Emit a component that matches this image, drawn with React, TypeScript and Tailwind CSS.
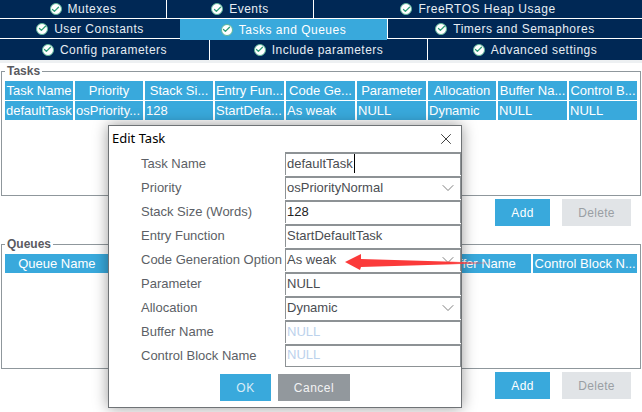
import type { ReactNode } from "react";
import { Check, ChevronDown, X } from "lucide-react";

const font = "font-['Liberation_Sans',Arial,sans-serif]";

function TabIcon() {
  return (
    <span className="flex h-[12px] w-[12px] items-center justify-center rounded-full border-[1.5px] border-[#5fb89a] bg-white">
      <Check size={9} strokeWidth={3.5} className="text-[#2f9e78]" />
    </span>
  );
}

function Tab({ label, className = "" }: { label: string; className?: string }) {
  return (
    <div className={`flex items-center justify-center gap-[6px] text-[12px] tracking-[0.5px] text-[#e6edf3] ${className}`}>
      <TabIcon />
      <span>{label}</span>
    </div>
  );
}

function Tabs() {
  return (
    <div className="bg-[#002855]">
      <div className="flex h-[19px] border-b border-white">
        <Tab label="Mutexes" className="w-[167px] border-r border-white" />
        <Tab label="Events" className="w-[147px] border-r border-white" />
        <Tab label="FreeRTOS Heap Usage" className="flex-1" />
      </div>
      <div className="flex h-[20px]">
        <Tab label="User Constants" className="w-[180px] border-b border-white" />
        <Tab label="Tasks and Queues" className="relative z-10 mb-[-1px] w-[207px] bg-[#39a9dc] text-white" />
        <Tab label="Timers and Semaphores" className="flex-1 border-b border-l border-white" />
      </div>
      <div className="flex h-[21px]">
        <Tab label="Config parameters" className="w-[210px] border-r border-white" />
        <Tab label="Include parameters" className="w-[217px]" />
        <Tab label="Advanced settings" className="flex-1 border-l border-white" />
      </div>
    </div>
  );
}

const taskColumns = [
  ["Task Name", "defaultTask"],
  ["Priority", "osPriority..."],
  ["Stack Si...", "128"],
  ["Entry Fun...", "StartDefa..."],
  ["Code Ge...", "As weak"],
  ["Parameter", "NULL"],
  ["Allocation", "Dynamic"],
  ["Buffer Na...", "NULL"],
  ["Control B...", "NULL"],
];

const queueColumns = ["Queue Name", "Queue Size", "Item Size", "Queue Type", "Buffer Name", "Control Block N..."];

function Group({ title, children }: { title: string; children: ReactNode }) {
  return (
    <fieldset className="mx-[1px] h-[132px] border border-[#8f979c] px-[3px]">
      <legend className="px-[2px] text-[12px] font-bold leading-[14px] text-[#5a5a5f]">{title}</legend>
      {children}
    </fieldset>
  );
}

function Actions() {
  return (
    <div className="flex h-[41px] items-start gap-[12px] pl-[495px] pt-[3px] text-[12px] tracking-[0.3px]">
      <div className="flex h-[27px] w-[55px] items-center justify-center bg-[#39a9dc] text-white">Add</div>
      <div className="flex h-[27px] w-[69px] items-center justify-center bg-[#e1e4e7] text-[#9a9fa4]">Delete</div>
    </div>
  );
}

const fields: { label: string; value: string; kind?: "select" | "hint" | "focus" | "dark" }[] = [
  { label: "Task Name", value: "defaultTask", kind: "focus" },
  { label: "Priority", value: "osPriorityNormal", kind: "select" },
  { label: "Stack Size (Words)", value: "128", kind: "dark" },
  { label: "Entry Function", value: "StartDefaultTask" },
  { label: "Code Generation Option", value: "As weak", kind: "select" },
  { label: "Parameter", value: "NULL" },
  { label: "Allocation", value: "Dynamic", kind: "select" },
  { label: "Buffer Name", value: "NULL", kind: "hint" },
  { label: "Control Block Name", value: "NULL", kind: "hint" },
];

function Dialog() {
  return (
    <div className="absolute left-[108px] top-[125px] h-[283px] w-[354px] border border-[#6f7376] bg-white shadow-[0_0_14px_rgba(0,0,0,0.4)]">
      <div className="flex h-[26px] items-center justify-between pl-[3px] pr-[6px]">
        <span className="font-['Noto_Sans',sans-serif] text-[13px] text-black">Edit Task</span>
        <X size={18} strokeWidth={1} className="text-black" />
      </div>
      <div className="flex flex-col gap-y-[1px]">
        {fields.map((f, i) => (
          <div key={f.label} className="flex h-[23px] text-[13px]">
            <div className="w-[176px] pl-[32px] leading-[24px] text-[#5c5f66]">{f.label}</div>
            <div className={`relative flex h-[23px] w-[176px] items-center border-x border-t-2 border-[#8d9295] pb-[2px] pl-[1px] ${f.kind === "dark" ? "text-[#222]" : "text-[#4a4d52]"} ${i === fields.length - 1 ? "border-b" : ""}`}>
              <span className={f.kind === "hint" ? "text-[#bcd2ec]" : ""}>{f.value}</span>
              {f.kind === "focus" && <span className="ml-[1px] h-[19px] w-[1px] bg-black" />}
              {f.kind === "select" && <ChevronDown size={20} strokeWidth={1} className="absolute right-[2px] text-[#666]" />}
            </div>
          </div>
        ))}
      </div>
      <div className="mt-[7px] flex justify-center gap-[7px] text-[12px] tracking-[0.5px]">
        <div className="flex h-[27px] w-[51px] items-center justify-center bg-[#39a9dc] text-[#d7ecf7]">OK</div>
        <div className="flex h-[27px] w-[72px] items-center justify-center bg-[#92989d] text-[#f2f3f4]">Cancel</div>
      </div>
    </div>
  );
}

export default function App() {
  return (
    <div className={`relative h-[412px] w-[642px] overflow-hidden bg-white ${font}`}>
      <Tabs />
      <div className="h-[3px] bg-[#edf0f2]" />
      <div className="pt-[1px]">
        <Group title="Tasks">
          <div className="mt-[3px] grid grid-cols-[68px_68px_68px_69px_69px_69px_68px_69px_68px] gap-x-[2px] gap-y-[1px] text-[13px] leading-[19px] text-white">
            {taskColumns.map(([head]) => (
              <div key={head} className="h-[19px] overflow-hidden whitespace-nowrap bg-[#39a9dc] text-center">{head}</div>
            ))}
            {taskColumns.map(([head, cell]) => (
              <div key={head} className="h-[19px] overflow-hidden whitespace-nowrap bg-[#39a9dc] pl-[1px]">{cell}</div>
            ))}
          </div>
        </Group>
        <Actions />
        <Group title="Queues">
          <div className="mt-[3px] grid grid-cols-6 gap-x-[2px] text-[13px] leading-[19px] text-white">
            {queueColumns.map((head) => (
              <div key={head} className="h-[19px] overflow-hidden whitespace-nowrap bg-[#39a9dc] text-center">{head}</div>
            ))}
          </div>
        </Group>
        <Actions />
      </div>
      <Dialog />
      <svg className="absolute left-0 top-0" width="642" height="412" viewBox="0 0 642 412">
        <defs>
          <linearGradient id="tail" x1="345" x2="495" y1="0" y2="0" gradientUnits="userSpaceOnUse">
            <stop offset="0" stopColor="#fb3a3a" />
            <stop offset="0.7" stopColor="#fb3a3a" />
            <stop offset="1" stopColor="#fb3a3a" stopOpacity="0.35" />
          </linearGradient>
        </defs>
        <path d="M345 262 L361 254 L361 259 L495 263 L361 267 L360 270 Z" fill="url(#tail)" />
      </svg>
    </div>
  );
}
